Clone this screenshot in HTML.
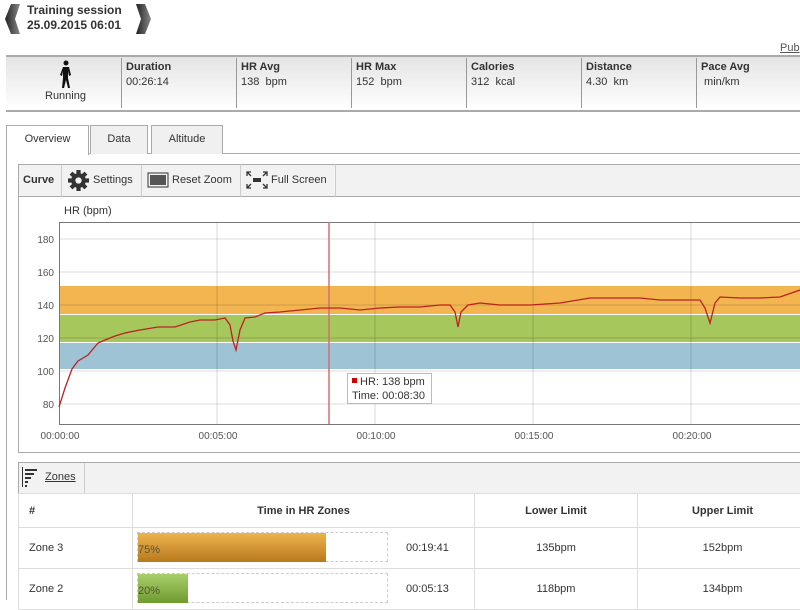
<!DOCTYPE html>
<html><head><meta charset="utf-8"><style>
*{box-sizing:border-box;margin:0;padding:0}
body{width:800px;height:600px;overflow:hidden;background:#fff;font-family:"Liberation Sans",Arial,sans-serif;font-size:11px;color:#333;position:relative}
.a{position:absolute}
.hdr{font-weight:bold;font-size:12px;color:#333;line-height:15px}
.sum{left:6px;top:55px;width:800px;height:57px;border-top:2px solid #aaa;border-bottom:2px solid #aaa;background:linear-gradient(#e4e4e4,#fff)}
.col{top:58px;height:50px;border-left:1px solid #999;padding:2px 4px;font-size:11px;line-height:15px}
.col b{display:block;color:#333}
.tab{top:125px;height:29px;border:1px solid #aaa;border-bottom:none;background:#f0f0f0;text-align:center;line-height:27px;font-size:11px}
.tb{left:18px;top:164px;width:790px;height:33px;border:1px solid #aaa;background:#f2f2f2}
.tbi{top:164px;height:33px;line-height:33px;border-right:1px solid #ccc;font-size:11px}
td,th{border:1px solid #ddd;font-size:11px;padding:0}
</style></head><body>
<svg class="a" style="left:5px;top:4px" width="16" height="30"><defs><linearGradient id="g" x1="0" x2="1"><stop offset="0" stop-color="#222"/><stop offset="1" stop-color="#888"/></linearGradient></defs><path d="M15 0 L6 0 L0 15 L6 30 L15 30 L10 15Z" fill="url(#g)"/></svg>
<svg class="a" style="left:135px;top:4px" width="16" height="30"><path d="M1 0 L10 0 L16 15 L10 30 L1 30 L6 15Z" fill="url(#g)"/></svg>
<div class="a hdr" style="left:27px;top:3px">Training session<br>25.09.2015 06:01</div>
<div class="a" style="left:780px;top:42px;text-decoration:underline;color:#555">Pub</div>
<div class="a sum"></div>
<svg class="a" style="left:58px;top:60px" width="16" height="30" viewBox="0 0 16 30"><circle cx="8" cy="3" r="2.5" fill="#111"/><path d="M5 7 L11 7 L13 15 L11 16 L10 11 L10 18 L12 28 L10 28 L8 20 L6 28 L4 28 L5 18 L5 11 L4 16 L2 15Z" fill="#111"/></svg>
<div class="a" style="left:45px;top:90px;font-size:11px">Running</div>
<div class="a col" style="left:121px"><b>Duration</b>00:26:14</div>
<div class="a col" style="left:236px"><b>HR Avg</b>138&nbsp; bpm</div>
<div class="a col" style="left:351px"><b>HR Max</b>152&nbsp; bpm</div>
<div class="a col" style="left:466px"><b>Calories</b>312&nbsp; kcal</div>
<div class="a col" style="left:581px"><b>Distance</b>4.30&nbsp; km</div>
<div class="a col" style="left:696px"><b>Pace Avg</b>&nbsp;min/km</div>
<div class="a" style="left:6px;top:153px;width:800px;height:1px;background:#aaa"></div>
<div class="a" style="left:6px;top:153px;width:1px;height:447px;background:#aaa"></div>
<div class="a tab" style="left:6px;width:83px;background:#fff;height:30px">Overview</div>
<div class="a tab" style="left:90px;width:58px">Data</div>
<div class="a tab" style="left:151px;width:72px">Altitude</div>
<div class="a tb"></div>
<div class="a tbi" style="left:18px;width:44px;padding-left:5px;font-weight:bold">Curve</div>
<svg class="a" style="left:68px;top:170px" width="21" height="21" viewBox="0 0 20 20"><g fill="#333"><circle cx="10" cy="10" r="7"/><rect x="8" y="0" width="4" height="20"/><rect x="0" y="8" width="20" height="4"/><rect x="8" y="0" width="4" height="20" transform="rotate(45 10 10)"/><rect x="8" y="0" width="4" height="20" transform="rotate(-45 10 10)"/></g><circle cx="10" cy="10" r="3" fill="#f2f2f2"/></svg>
<div class="a tbi" style="left:62px;width:80px;padding-left:31px">Settings</div>
<svg class="a" style="left:147px;top:172px" width="22" height="16"><rect x="1" y="1" width="20" height="14" fill="none" stroke="#333"/><rect x="3" y="3" width="16" height="10" fill="#555"/></svg>
<div class="a tbi" style="left:142px;width:99px;padding-left:30px">Reset Zoom</div>
<svg class="a" style="left:246px;top:171px" width="22" height="18" fill="none" stroke="#333" stroke-width="1.3"><path d="M1 5 L1 1 L5 1 M1 1 L5 5 M21 5 L21 1 L17 1 M21 1 L17 5 M1 13 L1 17 L5 17 M1 17 L5 13 M21 13 L21 17 L17 17 M21 17 L17 13"/><rect x="7" y="7" width="8" height="4" fill="#333" stroke="none"/></svg>
<div class="a tbi" style="left:241px;width:95px;padding-left:30px">Full Screen</div>
<div class="a" style="left:18px;top:196px;width:790px;height:257px;border:1px solid #aaa;border-top:none"></div>
<div class="a" style="left:64px;top:205px;font-size:11px">HR (bpm)</div>
<svg class="a" style="left:0;top:0" width="800" height="460" font-family="Liberation Sans,Arial,sans-serif" font-size="10" fill="#555">
<g stroke="#ddd"><line x1="59" y1="239" x2="800" y2="239"/><line x1="59" y1="272" x2="800" y2="272"/><line x1="59" y1="305" x2="800" y2="305"/><line x1="59" y1="338" x2="800" y2="338"/><line x1="59" y1="371" x2="800" y2="371"/><line x1="59" y1="404" x2="800" y2="404"/></g>
<rect x="60" y="286" width="740" height="28" fill="#f2b550"/>
<rect x="60" y="315" width="740" height="27" fill="#a5c75b"/>
<rect x="60" y="343" width="740" height="26" fill="#9dc3d5"/>
<g stroke="#000" stroke-opacity=".15"><line x1="217" y1="222" x2="217" y2="424"/><line x1="375" y1="222" x2="375" y2="424"/><line x1="533" y1="222" x2="533" y2="424"/><line x1="691" y1="222" x2="691" y2="424"/><line x1="59" y1="305" x2="800" y2="305"/><line x1="59" y1="338" x2="800" y2="338"/></g>
<rect x="59.5" y="222.5" width="750" height="202" fill="none" stroke="#777"/>
<line x1="329" y1="222" x2="329" y2="424" stroke="#d07070" stroke-width="1.5"/>
<path d="M59 407 L65 388 L72 369 L78 361 L88 355 L98 343 L105 340 L115 336 L125 333 L140 330 L158 327 L175 327 L190 322 L200 320 L215 320 L225 318 L230 325 L233 341 L236 350 L240 330 L245 318 L255 317 L265 313 L280 312 L300 310 L320 308 L340 308 L360 310 L380 308 L400 307 L420 307 L440 305 L450 305 L455 312 L458 327 L461 312 L468 305 L480 303 L500 305 L530 305 L560 303 L590 298 L620 298 L640 298 L660 300 L680 300 L700 300 L705 308 L710 323 L715 303 L720 297 L740 298 L760 298 L780 297 L800 290" fill="none" stroke="#b22" stroke-width="1.3"/>
<g text-anchor="end"><text x="54" y="243">180</text><text x="54" y="276">160</text><text x="54" y="309">140</text><text x="54" y="342">120</text><text x="54" y="375">100</text><text x="54" y="408">80</text></g>
<g text-anchor="middle"><text x="60" y="439">00:00:00</text><text x="218" y="439">00:05:00</text><text x="376" y="439">00:10:00</text><text x="534" y="439">00:15:00</text><text x="692" y="439">00:20:00</text></g>
<rect x="347.5" y="373.5" width="84" height="30" fill="#fff" stroke="#bbb"/>
<rect x="352" y="378" width="5" height="5" fill="#c00"/>
<text x="360" y="385" fill="#333" font-size="11">HR: 138 bpm</text><text x="352" y="399" fill="#333" font-size="11">Time: 00:08:30</text>
</svg>
<div class="a" style="left:18px;top:462px;width:790px;height:140px;border:1px solid #aaa;background:#f2f2f2"></div>
<div class="a" style="left:19px;top:463px;width:66px;height:30px;border-right:1px solid #ccc"></div>
<svg class="a" style="left:22px;top:467px" width="18" height="22"><rect x="0" y="0" width="1" height="20" fill="#333"/><g fill="#333"><rect x="3" y="2" width="12" height="2"/><rect x="3" y="6" width="9" height="2"/><rect x="3" y="10" width="6" height="2"/><rect x="3" y="14" width="3" height="2"/><rect x="3" y="18" width="2" height="2"/></g></svg>
<div class="a" style="left:45px;top:471px;text-decoration:underline;font-size:11px">Zones</div>
<table class="a" style="left:18px;top:493px;width:790px;border-collapse:collapse;background:#fff">
<tr><th style="width:114px;height:34px;text-align:left;padding-left:10px">#</th><th style="width:342px">Time in HR Zones</th><th style="width:163px">Lower Limit</th><th>Upper Limit</th></tr>
<tr><td style="padding-left:10px;height:41px">Zone 3</td><td><div style="position:relative;height:40px"><div class="a" style="left:4px;top:4px;width:251px;height:30px;border:1px dashed #ccc"></div><div class="a" style="left:5px;top:5px;width:188px;height:29px;background:linear-gradient(#eeb24f,#b87a1c);padding-top:11px;color:#553">75%</div><div class="a" style="left:273px;top:14px">00:19:41</div></div></td><td style="text-align:center">135bpm</td><td style="text-align:center">152bpm</td></tr>
<tr><td style="padding-left:10px;height:41px">Zone 2</td><td><div style="position:relative;height:40px"><div class="a" style="left:4px;top:4px;width:251px;height:30px;border:1px dashed #ccc"></div><div class="a" style="left:5px;top:5px;width:50px;height:29px;background:linear-gradient(#a8cf6a,#6e9a30);padding-top:11px;color:#553">20%</div><div class="a" style="left:273px;top:14px">00:05:13</div></div></td><td style="text-align:center">118bpm</td><td style="text-align:center">134bpm</td></tr>
</table>
</body></html>
